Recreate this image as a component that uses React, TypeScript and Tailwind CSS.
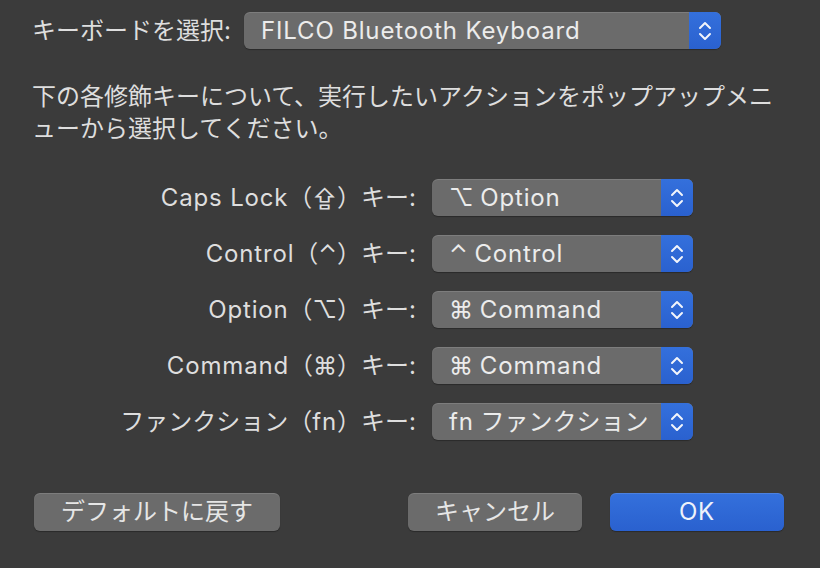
import React from "react";

const rows = [
  { label: "Caps Lock（⇪）キー:", value: "⌥ Option" },
  { label: "Control（⌃）キー:", value: "⌃ Control" },
  { label: "Option（⌥）キー:", value: "⌘ Command" },
  { label: "Command（⌘）キー:", value: "⌘ Command" },
  { label: "ファンクション（fn）キー:", value: "fn ファンクション" },
];

// Latin runs get a little tracking so Inter reads as wide as the system font
const Txt: React.FC<{ text: string }> = ({ text }) => {
  const parts = text.split(/([A-Za-z][A-Za-z ]*[A-Za-z]|[A-Za-z])/);
  return (
    <span>
      {parts.map((p, i) =>
        /^[A-Za-z]/.test(p) ? (
          <span key={i} className="tracking-[0.035em]">
            {p}
          </span>
        ) : (
          <React.Fragment key={i}>{p}</React.Fragment>
        )
      )}
    </span>
  );
};

const Stepper: React.FC = () => (
  <div className="w-[32px] h-full flex items-center justify-center bg-gradient-to-b from-[#3470dc] to-[#2a61cf]">
    <svg width="14" height="22" viewBox="0 0 14 22" fill="none">
      <path d="M2 8 L7 3 L12 8" stroke="#f2f5fb" strokeWidth="2" strokeLinecap="round" strokeLinejoin="round" />
      <path d="M2 14 L7 19 L12 14" stroke="#f2f5fb" strokeWidth="2" strokeLinecap="round" strokeLinejoin="round" />
    </svg>
  </div>
);

const Select: React.FC<{ value: string; className?: string }> = ({ value, className }) => (
  <div
    className={
      "h-[37px] flex items-stretch rounded-[6px] overflow-hidden bg-[#6b6b6b] shadow-[inset_0_1px_0_rgba(255,255,255,0.12),0_1px_1px_rgba(0,0,0,0.3)] " +
      (className || "")
    }
  >
    <div className="flex-1 flex items-center pl-[17px] text-[24px] text-[#ececec] whitespace-nowrap">
      <Txt text={value} />
    </div>
    <Stepper />
  </div>
);

const Button: React.FC<{ children: React.ReactNode; primary?: boolean; className?: string }> = ({
  children,
  primary,
  className,
}) => (
  <div
    className={
      "h-[38px] flex items-center justify-center rounded-[6px] text-[24px] shadow-[inset_0_1px_0_rgba(255,255,255,0.12),0_1px_1px_rgba(0,0,0,0.3)] " +
      (primary
        ? "bg-gradient-to-b from-[#3470dc] to-[#2a61cf] text-[#eef2fa] "
        : "bg-[#6b6b6b] text-[#e6e6e6] ") +
      (className || "")
    }
  >
    {children}
  </div>
);

export default function App() {
  return (
    <div
      className="w-[820px] h-[568px] bg-[#3b3b3b] text-[#dedede] overflow-hidden pl-[32px] pt-[12px]"
      style={{ fontFamily: '"Inter", "Noto Sans CJK JP", "DejaVu Sans", sans-serif' }}
    >
      <div className="flex items-center">
        <div className="text-[24px] leading-[37px] w-[212px]">キーボードを選択:</div>
        <Select value="FILCO Bluetooth Keyboard" className="w-[477px]" />
      </div>

      <p className="mt-[32px] text-[24px] leading-[32px]">
        下の各修飾キーについて、実行したいアクションをポップアップメニ
        <br />
        ューから選択してください。
      </p>

      <div className="mt-[34px] grid grid-cols-[384px_261px] gap-x-[16px] gap-y-[19px] items-center">
        {rows.map((r) => (
          <React.Fragment key={r.label}>
            <div className="text-right text-[24px] leading-[37px] whitespace-nowrap">
              <Txt text={r.label} />
            </div>
            <Select value={r.value} />
          </React.Fragment>
        ))}
      </div>

      <div className="mt-[53px] flex items-center">
        <Button className="w-[246px] ml-[2px]">デフォルトに戻す</Button>
        <Button className="w-[174px] ml-[128px]">キャンセル</Button>
        <Button primary className="w-[174px] ml-[28px]">
          <span className="tracking-[0.035em]">OK</span>
        </Button>
      </div>
    </div>
  );
}
